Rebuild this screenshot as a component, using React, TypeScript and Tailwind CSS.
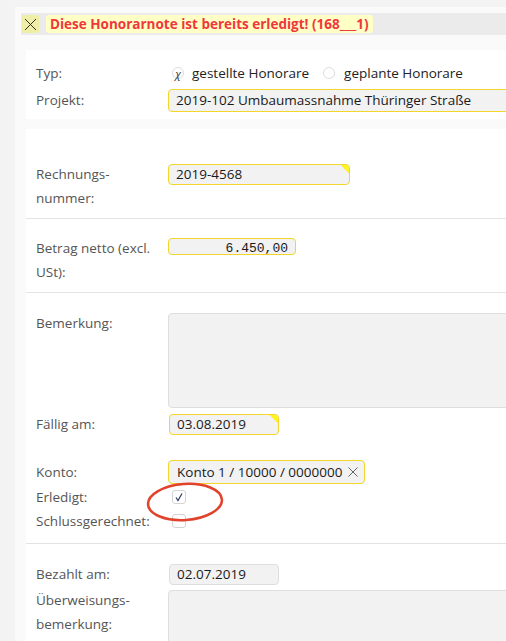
import React from 'react';

function Corner() {
  return (
    <div className="absolute right-0 top-0 h-[9px] w-[9px] rounded-tr-[4px] bg-[linear-gradient(225deg,#ffff00_0%,#ffee33_45%,transparent_50%)]" />
  );
}

function Field({ w, children, yellow = true, mono = false, corner = false, h = 'h-[21px]' }: { w: string; children?: React.ReactNode; yellow?: boolean; mono?: boolean; corner?: boolean; h?: string }) {
  return (
    <div
      className={`relative ${w} ${h} shrink-0 rounded-[4px] border bg-[#f2f2f2] px-[7px] text-[13.5px] leading-[19px] text-[#1a1a1a] ${
        yellow ? 'border-[#f3d62a]' : 'border-[#dedede]'
      } ${mono ? "text-right font-['Liberation_Mono',monospace] text-[13px] leading-[15px] px-[2px]" : ''}`}
    >
      {children}
      {corner && <Corner />}
    </div>
  );
}

function Row({ label, children, className = '' }: { label: React.ReactNode; children?: React.ReactNode; className?: string }) {
  return (
    <div className={`flex items-start ${className}`}>
      <div className="w-[132px] shrink-0 text-[13.5px] leading-6 text-[#555]">{label}</div>
      <div className="flex min-h-6 items-center">{children}</div>
    </div>
  );
}

function Check({ checked }: { checked?: boolean }) {
  return (
    <div className="ml-[4px] flex h-[14px] w-[14px] items-center justify-center rounded-[3px] border border-[#d4d4d4] bg-white">
      {checked && (
        <svg width="10" height="10" viewBox="0 0 10 10">
          <path d="M2 5.5L4 8.5L8 1.5" fill="none" stroke="#2c3e66" strokeWidth="1.2" />
        </svg>
      )}
    </div>
  );
}

export default function App() {
  return (
    <div className="relative min-h-[641px] w-[506px] overflow-hidden bg-[#f3f3f3] pl-[15px] pt-[7px] font-['Open_Sans',sans-serif]">
      <div className="w-[560px] min-h-[640px] bg-[#fafafa] pt-[6px]">
        {/* Status bar */}
        <div className="ml-[6px] flex h-[22px] items-center gap-[7px] bg-[#ebebeb] pl-[1px]">
          <div className="flex h-[18px] w-[17px] items-center justify-center rounded-[2px] bg-[#eeeea6]">
            <svg width="13" height="13" viewBox="0 0 13 13">
              <path d="M1 1L12 12M12 1L1 12" stroke="#333" strokeWidth="1" />
            </svg>
          </div>
          <div className="flex h-[18px] items-center rounded-[3px] bg-[#ffffc6] px-[4px] text-[13.5px] font-bold text-[#f0373c]">
            Diese Honorarnote ist bereits erledigt! (168___1)
          </div>
        </div>

        {/* Typ / Projekt */}
        <div className="ml-[11px] mt-[15px] bg-white pb-[7px] pl-[10px] pt-[11px]">
          <Row label="Typ:">
            <div className="ml-[4px] flex items-center text-[13.5px] text-[#222]">
              <span className="flex h-[12px] w-[12px] items-center justify-center rounded-full border border-[#dcdcdc] bg-white text-[11px] italic leading-none text-[#333]">χ</span>
              <span className="ml-[8px]">gestellte Honorare</span>
              <span className="ml-[14px] h-[12px] w-[12px] rounded-full border border-[#dcdcdc] bg-white" />
              <span className="ml-[9px]">geplante Honorare</span>
            </div>
          </Row>
          <Row label="Projekt:" className="mt-[3px]">
            <Field w="w-[380px]" h="h-[23px]">
              <span className="leading-[21px]">2019-102 Umbaumassnahme Thüringer Straße</span>
            </Field>
          </Row>
        </div>

        {/* Rechnungsnummer */}
        <div className="ml-[11px] mt-[10px] border-b border-[#e3e3e3] bg-white pb-[8px] pl-[10px] pt-[33px]">
          <Row label={<>Rechnungs-<br />nummer:</>}>
            <div className="mt-[2px] self-start">
              <Field w="w-[182px]" corner>2019-4568</Field>
            </div>
          </Row>
        </div>

        {/* Betrag */}
        <div className="ml-[11px] border-b border-[#e3e3e3] bg-white pb-[8px] pl-[10px] pt-[17px]">
          <Row label={<>Betrag netto (excl.<br />USt):</>}>
            <div className="mt-[2px] self-start">
              <Field w="w-[128px]" h="h-[17px]" mono>6.450,00</Field>
            </div>
          </Row>
        </div>

        {/* Bemerkung etc. */}
        <div className="ml-[11px] border-b border-[#e3e3e3] bg-white pb-[10px] pl-[10px] pt-[18px]">
          <Row label="Bemerkung:">
            <div className="mt-[2px] h-[95px] w-[400px] self-start rounded-[4px] border border-[#dedede] bg-[#f2f2f2]" />
          </Row>
          <Row label="Fällig am:" className="mt-[4px]">
            <div className="ml-[1px]">
              <Field w="w-[110px]" corner>03.08.2019</Field>
            </div>
          </Row>
          <div className="h-[24px]" />
          <Row label="Konto:">
            <div className="flex h-[24px] items-center gap-[6px] rounded-[4px] border border-[#f3d62a] bg-[#f2f2f2] pl-[8px] pr-[6px] text-[13.5px] text-[#1a1a1a]">
              <span>Konto 1 / 10000 / 0000000</span>
              <svg width="10" height="10" viewBox="0 0 10 10">
                <path d="M0.5 0.5L9.5 9.5M9.5 0.5L0.5 9.5" stroke="#666" strokeWidth="1" />
              </svg>
            </div>
          </Row>
          <Row label="Erledigt:" className="mt-[1px]">
            <Check checked />
          </Row>
          <Row label="Schlussgerechnet:">
            <Check />
          </Row>
        </div>

        {/* Bezahlt */}
        <div className="ml-[11px] bg-white pb-[20px] pl-[10px] pt-[18px]">
          <Row label="Bezahlt am:">
            <div className="ml-[1px]">
              <Field w="w-[110px]" yellow={false}>02.07.2019</Field>
            </div>
          </Row>
          <Row label={<>Überweisungs-<br />bemerkung:</>} className="mt-[2px]">
            <div className="mt-[2px] h-[80px] w-[400px] self-start rounded-[4px] border border-[#dedede] bg-[#f2f2f2]" />
          </Row>
        </div>
      </div>

      {/* red marker ellipse */}
      <svg className="absolute left-[145px] top-[481px]" width="80" height="42" viewBox="0 0 80 42">
        <ellipse cx="40" cy="21" rx="37" ry="18" fill="none" stroke="#e2412b" strokeWidth="2.5" transform="rotate(-4 40 21)" />
      </svg>
    </div>
  );
}
